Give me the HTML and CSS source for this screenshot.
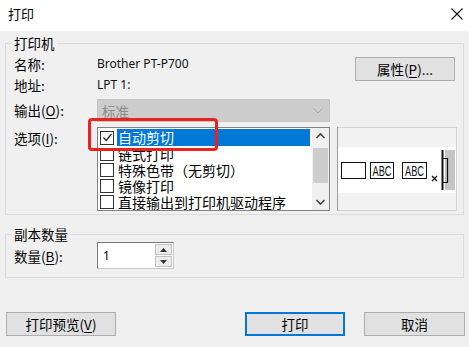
FILE: index.html
```html
<!DOCTYPE html>
<html lang="zh-CN">
<head>
<meta charset="utf-8">
<title>打印</title>
<link rel="stylesheet" href="styles.css">
</head>
<body>
<div class="dialog">
  <div class="titlebar">
    <span class="title">打印</span>
    <svg class="close" width="12" height="12" viewBox="0 0 12 12"><path d="M0.5 0.5 L11.5 11.5 M11.5 0.5 L0.5 11.5" stroke="#111" stroke-width="1.1" fill="none"/></svg>
  </div>
  <div class="body">
    <fieldset class="group printer">
      <legend>打印机</legend>
      <div class="pgrid">
        <span class="lbl">名称:</span>
        <span class="val">Brother PT-P700</span>
        <button class="btn props">属性(<u>P</u>)...</button>
        <span class="lbl">地址:</span>
        <span class="val">LPT 1:</span>
        <span class="lbl out">输出(<u>O</u>):</span>
        <div class="combo"><span>标准</span>
          <svg width="10" height="6" viewBox="0 0 10 6"><path d="M0.5 0.5 L5 5 L9.5 0.5" stroke="#a8a8a8" fill="none"/></svg>
        </div>
        <span class="lbl opt">选项(<u>I</u>):</span>
        <div class="listwrap">
          <div class="list">
            <div class="items">
              <div class="item first"><span class="cb checked"><svg width="11" height="11" viewBox="0 0 11 11"><path d="M1.5 5.5 L4.2 8.5 L9.5 2" stroke="#222" stroke-width="1.2" fill="none"/></svg></span><span class="txt sel">自动剪切</span></div>
              <div class="item cut"><span class="cb"></span><span class="txt">链式打印</span></div>
              <div class="item"><span class="cb"></span><span class="txt">特殊色带（无剪切）</span></div>
              <div class="item"><span class="cb"></span><span class="txt">镜像打印</span></div>
              <div class="item"><span class="cb"></span><span class="txt">直接输出到打印机驱动程序</span></div>
            </div>
            <div class="scrollbar">
              <svg class="arrow" width="17" height="17" viewBox="0 0 17 17"><path d="M4.5 10 L8.5 6 L12.5 10" stroke="#444" stroke-width="1.6" fill="none"/></svg>
              <div class="track"><div class="thumb"></div></div>
              <svg class="arrow" width="17" height="17" viewBox="0 0 17 17"><path d="M4.5 7 L8.5 11 L12.5 7" stroke="#444" stroke-width="1.6" fill="none"/></svg>
            </div>
          </div>
          <div class="redbox"></div>
        </div>
        <div class="preview">
          <svg width="120" height="84" viewBox="0 0 120 84">
            <rect x="0" y="0" width="120" height="84" fill="#f2f2f2"/>
            <rect x="1" y="20" width="118" height="46" fill="#ffffff"/>
            <rect x="4.5" y="35.5" width="24" height="16" fill="#fff" stroke="#111"/>
            <rect x="33.5" y="35.5" width="23" height="16" fill="#fff" stroke="#111"/>
            <text x="35.5" y="49" font-family="Liberation Sans, sans-serif" font-size="14" textLength="19" lengthAdjust="spacingAndGlyphs" fill="#111">ABC</text>
            <rect x="65.5" y="35.5" width="24" height="16" fill="#fff" stroke="#111"/>
            <text x="68" y="49" font-family="Liberation Sans, sans-serif" font-size="14" textLength="19" lengthAdjust="spacingAndGlyphs" fill="#111">ABC</text>
            <path d="M95 49 L100 54 M100 49 L95 54" stroke="#111" stroke-width="1.3"/>
            <rect x="108" y="23" width="10" height="40" fill="#c4c4c4"/>
            <path d="M105.5 23 L105.5 63" stroke="#111" stroke-width="2"/>
            <path d="M105 31.5 L110.5 31.5 L110.5 55.5 L105 55.5" stroke="#111" stroke-width="1.2" fill="none"/>
            <rect x="0.5" y="0.5" width="119" height="83" fill="none" stroke="#d2d2d2"/>
            <path d="M0.5 0 L0.5 84" stroke="#9a9a9a"/>
          </svg>
        </div>
      </div>
    </fieldset>
    <fieldset class="group copies">
      <legend>副本数量</legend>
      <div class="crow">
        <span class="lbl">数量(<u>B</u>):</span>
        <div class="spin">
          <span class="num">1</span>
          <div class="spinbtns">
            <span class="sb"><svg width="7" height="4" viewBox="0 0 7 4"><path d="M0 4 L3.5 0 L7 4Z" fill="#333"/></svg></span>
            <span class="sb"><svg width="7" height="4" viewBox="0 0 7 4"><path d="M0 0 L3.5 4 L7 0Z" fill="#333"/></svg></span>
          </div>
        </div>
      </div>
    </fieldset>
    <div class="buttons">
      <button class="btn preview-btn">打印预览(<u>V</u>)</button>
      <button class="btn print default">打印</button>
      <button class="btn cancel">取消</button>
    </div>
  </div>
</div>
</body>
</html>
```
FILE: styles.css
```css
* { box-sizing: border-box; }
html, body { margin: 0; padding: 0; }
body {
  width: 469px;
  height: 347px;
  overflow: hidden;
  background: #f0f0f0;
  font-family: "Noto Sans", "Noto Sans CJK SC", sans-serif;
  font-size: 13px;
  color: #000;
}
.dialog { width: 469px; height: 347px; }
.titlebar {
  height: 31px;
  background: #fff;
  display: flex;
  justify-content: space-between;
  align-items: flex-start;
  padding: 6px 6px 0 8px;
}
.title { font-family: "Noto Sans CJK SC", sans-serif; font-size: 13px; line-height: 16px; }
.close { margin-top: 2px; margin-right: 0; }

.group {
  margin: 4px 5px 0;
  padding: 2px 6px 3px 8px;
  border: 1px solid #dcdcdc;
  min-width: 0;
}
.group legend {
  font-family: "Noto Sans CJK SC", sans-serif;
  font-size: 13.5px;
  line-height: 16px;
  padding: 0 2px;
  margin-left: -2px;
}
.lbl { font-family: "Noto Sans CJK SC", sans-serif; font-size: 13.5px; line-height: 16px; }
u { text-decoration: underline; text-underline-offset: 2px; }

.pgrid {
  display: grid;
  grid-template-columns: 83px 233px 7px 120px;
  grid-template-rows: 21px 21px 27px 89px;
}
.pgrid .lbl { grid-column: 1; align-self: center; }
.val { grid-column: 2; align-self: center; font-size: 12px; line-height: 16px; color: #111; }
.props {
  grid-column: 3 / 5;
  grid-row: 1 / 3;
  justify-self: end;
  align-self: start;
  margin-top: 4px;
  margin-right: 2px;
  width: 100px;
}
.pgrid .lbl.out { grid-row: 3; align-self: end; line-height: 23px; }
.combo {
  grid-column: 2;
  grid-row: 3;
  align-self: end;
  height: 23px;
  background: #cccccc;
  border: 1px solid #c4c4c4;
  display: flex;
  align-items: center;
  justify-content: space-between;
  padding: 0 6px 0 4px;
  color: #8a8a8a;
  font-family: "Noto Sans CJK SC", sans-serif;
  font-size: 13.5px;
}
.pgrid .lbl.opt { grid-row: 4; align-self: start; margin-top: 8px; }
.listwrap { grid-column: 2; grid-row: 4; align-self: end; position: relative; height: 84px; }
.list {
  height: 84px;
  border: 1px solid #828282;
  background: #fff;
  display: flex;
}
.items { flex: 1; padding-top: 1px; padding-left: 2px; }
.item {
  display: flex;
  align-items: center;
  height: 16px;
  font-family: "Noto Sans CJK SC", sans-serif;
  font-size: 14px;
  line-height: 16px;
}
.item.first { height: 17px; }
.item.cut { clip-path: inset(4px 0 0 0); }
.cb {
  width: 14px;
  height: 14px;
  border: 1px solid #333;
  background: #fff;
  margin-right: 3px;
  display: flex;
  align-items: center;
  justify-content: center;
  flex: none;
}
.txt { padding-left: 1px; white-space: nowrap; }
.txt.sel {
  flex: 1;
  background: #0078d7;
  color: #fff;
  margin-right: 2px;
  line-height: 17px;
}
.scrollbar {
  width: 17px;
  background: #f0f0f0;
  display: flex;
  flex-direction: column;
}
.arrow { flex: none; display: block; }
.track { flex: 1; padding-top: 3px; }
.thumb { height: 35px; background: #cdcdcd; margin: 0 1px; }
.redbox {
  position: absolute;
  left: -9px;
  top: -9px;
  width: 130px;
  height: 33px;
  border: 3px solid #e8221e;
  border-radius: 4px;
}
.preview { grid-column: 4; grid-row: 4; align-self: end; height: 84px; }
.preview svg { display: block; }

.copies { margin-top: 11px; padding: 0 6px 8px 8px; }
.crow { display: flex; align-items: center; height: 27px; }
.crow .lbl { width: 83px; }
.spin {
  width: 77px;
  height: 27px;
  background: #fff;
  border: 1px solid #7a7a7a;
  border-right-color: #c8c8c8;
  border-bottom-color: #c8c8c8;
  display: flex;
  align-items: center;
  justify-content: space-between;
  padding: 0 1px 0 5px;
}
.num { font-size: 12px; }
.spinbtns { display: flex; flex-direction: column; gap: 1px; }
.sb {
  width: 17px;
  height: 11px;
  background: #ececec;
  border: 1px solid #c2c2c2;
  display: flex;
  align-items: center;
  justify-content: center;
}
.sb svg { display: block; }

.buttons {
  display: flex;
  margin-top: 34px;
  padding: 0 4px 0 6px;
}
.btn {
  height: 24px;
  background: #e1e1e1;
  border: 1px solid #adadad;
  font-family: "Noto Sans CJK SC", sans-serif;
  font-size: 13.5px;
  line-height: 20px;
  padding: 0;
  color: #000;
}
.preview-btn { width: 110px; }
.print { width: 100px; margin-left: auto; }
.default { border-color: #0078d7; box-shadow: inset 0 0 0 1px #0078d7; }
.cancel { width: 101px; margin-left: 19px; }
```
